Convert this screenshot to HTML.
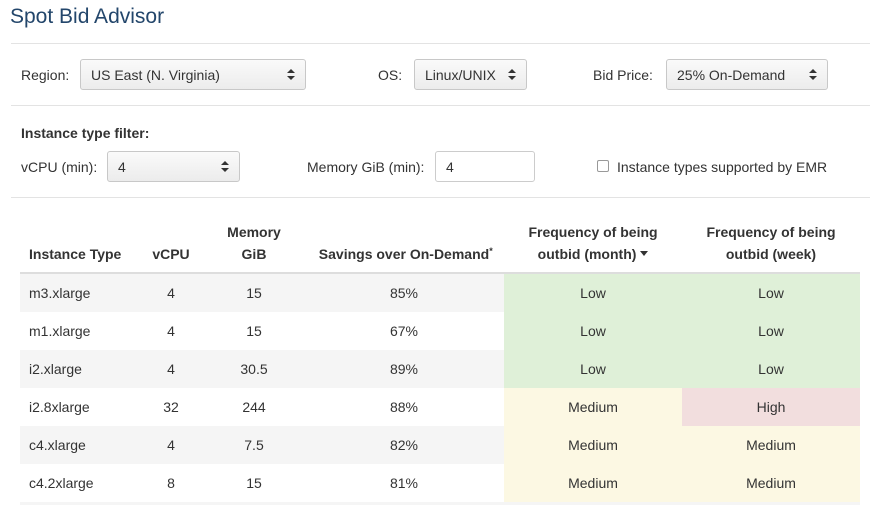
<!DOCTYPE html>
<html><head><style>
*{margin:0;padding:0;box-sizing:border-box}
body{width:874px;height:505px;background:#fff;font-family:"Liberation Sans",sans-serif;font-size:14px;color:#333;position:relative;overflow:hidden}
.a{position:absolute;white-space:nowrap}
.hr{position:absolute;left:11px;width:859px;height:1px;background:#e3e3e3}
.sel{position:absolute;height:31px;border:1px solid #c8c8c8;border-radius:3px;background:linear-gradient(#fafafa,#ececec);padding:7px 10px;font-size:14px}
.sel:after{content:"";position:absolute;right:10px;top:9px;border:4px solid transparent;border-bottom:4px solid #333;border-top:0}
.sel:before{content:"";position:absolute;right:10px;top:16px;border:4px solid transparent;border-top:4px solid #333;border-bottom:0}
.row{position:absolute;left:20px;width:840px;height:38px}
.row div{position:absolute;top:11px;text-align:center}
.th{position:absolute;font-weight:bold;text-align:center;line-height:22px}
</style></head><body>
<div class="a" style="left:10px;top:5px;font-size:21px;color:#23466b">Spot Bid Advisor</div>
<div class="hr" style="top:43px"></div>
<div class="a" style="left:21px;top:67px">Region:</div>
<div class="sel" style="left:80px;top:59px;width:226px">US East (N. Virginia)</div>
<div class="a" style="left:378px;top:67px">OS:</div>
<div class="sel" style="left:414px;top:59px;width:113px">Linux/UNIX</div>
<div class="a" style="left:593px;top:67px">Bid Price:</div>
<div class="sel" style="left:666px;top:59px;width:162px">25% On-Demand</div>
<div class="hr" style="top:105px"></div>
<div class="a" style="left:21px;top:125px;font-weight:bold">Instance type filter:</div>
<div class="a" style="left:21px;top:159px">vCPU (min):</div>
<div class="sel" style="left:107px;top:151px;width:133px">4</div>
<div class="a" style="left:307px;top:159px">Memory GiB (min):</div>
<div class="a" style="left:435px;top:151px;width:100px;height:31px;border:1px solid #ccc;border-radius:3px;padding:7px 10px">4</div>
<div class="a" style="left:597px;top:160px;width:12px;height:12px;border:1px solid #999;border-radius:2px;background:#fff"></div>
<div class="a" style="left:617px;top:159px">Instance types supported by EMR</div>
<div class="hr" style="top:197px"></div>
<div class="th" style="left:29px;top:243px;text-align:left">Instance Type</div>
<div class="th" style="left:141px;top:243px;width:60px">vCPU</div>
<div class="th" style="left:214px;top:221px;width:80px">Memory<br>GiB</div>
<div class="th" style="left:304px;top:243px;width:200px">Savings over On-Demand<span style="position:absolute;font-size:9px;margin-top:-3px">*</span></div>
<div class="th" style="left:504px;top:221px;width:178px">Frequency of being<br>outbid (month) <span style="display:inline-block;border:4px solid transparent;border-top:5px solid #333;vertical-align:-1px"></span></div>
<div class="th" style="left:682px;top:221px;width:178px">Frequency of being<br>outbid (week)</div>
<div class="a" style="left:20px;top:272px;width:840px;height:2px;background:#ddd"></div>
<div class="row" style="top:274px;background:#f5f5f5"><div style="left:9px">m3.xlarge</div><div style="left:121px;width:60px">4</div><div style="left:194px;width:80px">15</div><div style="left:284px;width:200px">85%</div><div style="left:484px;width:178px;top:0;height:38px;padding-top:11px;background:#dff0d8">Low</div><div style="left:662px;width:178px;top:0;height:38px;padding-top:11px;background:#dff0d8">Low</div></div>
<div class="row" style="top:312px"><div style="left:9px">m1.xlarge</div><div style="left:121px;width:60px">4</div><div style="left:194px;width:80px">15</div><div style="left:284px;width:200px">67%</div><div style="left:484px;width:178px;top:0;height:38px;padding-top:11px;background:#dff0d8">Low</div><div style="left:662px;width:178px;top:0;height:38px;padding-top:11px;background:#dff0d8">Low</div></div>
<div class="row" style="top:350px;background:#f5f5f5"><div style="left:9px">i2.xlarge</div><div style="left:121px;width:60px">4</div><div style="left:194px;width:80px">30.5</div><div style="left:284px;width:200px">89%</div><div style="left:484px;width:178px;top:0;height:38px;padding-top:11px;background:#dff0d8">Low</div><div style="left:662px;width:178px;top:0;height:38px;padding-top:11px;background:#dff0d8">Low</div></div>
<div class="row" style="top:388px"><div style="left:9px">i2.8xlarge</div><div style="left:121px;width:60px">32</div><div style="left:194px;width:80px">244</div><div style="left:284px;width:200px">88%</div><div style="left:484px;width:178px;top:0;height:38px;padding-top:11px;background:#fcf8e3">Medium</div><div style="left:662px;width:178px;top:0;height:38px;padding-top:11px;background:#f2dede">High</div></div>
<div class="row" style="top:426px;background:#f5f5f5"><div style="left:9px">c4.xlarge</div><div style="left:121px;width:60px">4</div><div style="left:194px;width:80px">7.5</div><div style="left:284px;width:200px">82%</div><div style="left:484px;width:178px;top:0;height:38px;padding-top:11px;background:#fcf8e3">Medium</div><div style="left:662px;width:178px;top:0;height:38px;padding-top:11px;background:#fcf8e3">Medium</div></div>
<div class="row" style="top:464px"><div style="left:9px">c4.2xlarge</div><div style="left:121px;width:60px">8</div><div style="left:194px;width:80px">15</div><div style="left:284px;width:200px">81%</div><div style="left:484px;width:178px;top:0;height:38px;padding-top:11px;background:#fcf8e3">Medium</div><div style="left:662px;width:178px;top:0;height:38px;padding-top:11px;background:#fcf8e3">Medium</div></div>
<div class="a" style="left:20px;top:502px;width:840px;height:3px;background:#f5f5f5"></div>
</body></html>
